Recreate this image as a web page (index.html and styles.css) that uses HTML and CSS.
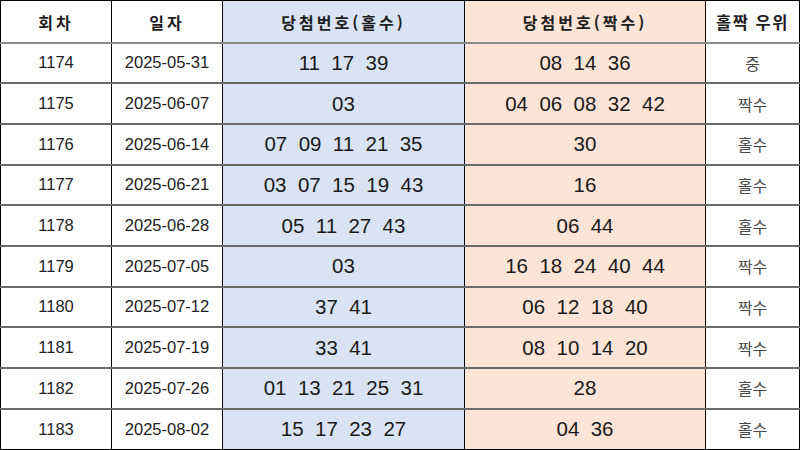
FILE: index.html
```html
<!DOCTYPE html>
<html lang="ko">
<head>
<meta charset="utf-8">
<link rel="stylesheet" href="styles.css">
</head>
<body>
<table class="grid">
  <colgroup>
    <col class="c-round"><col class="c-date"><col class="c-odd"><col class="c-even"><col class="c-win">
  </colgroup>
  <thead>
    <tr>
      <th>회차</th><th>일자</th><th class="odd">당첨번호(홀수)</th><th class="even">당첨번호(짝수)</th><th class="win-h">홀짝 우위</th>
    </tr>
  </thead>
  <tbody>
    <tr><td>1174</td><td>2025-05-31</td><td class="odd num">11  17  39</td><td class="even num">08  14  36</td><td class="win">중</td></tr>
    <tr><td>1175</td><td>2025-06-07</td><td class="odd num">03</td><td class="even num">04  06  08  32  42</td><td class="win">짝수</td></tr>
    <tr><td>1176</td><td>2025-06-14</td><td class="odd num">07  09  11  21  35</td><td class="even num">30</td><td class="win">홀수</td></tr>
    <tr><td>1177</td><td>2025-06-21</td><td class="odd num">03  07  15  19  43</td><td class="even num">16</td><td class="win">홀수</td></tr>
    <tr><td>1178</td><td>2025-06-28</td><td class="odd num">05  11  27  43</td><td class="even num">06  44</td><td class="win">홀수</td></tr>
    <tr><td>1179</td><td>2025-07-05</td><td class="odd num">03</td><td class="even num">16  18  24  40  44</td><td class="win">짝수</td></tr>
    <tr><td>1180</td><td>2025-07-12</td><td class="odd num">37  41</td><td class="even num">06  12  18  40</td><td class="win">짝수</td></tr>
    <tr><td>1181</td><td>2025-07-19</td><td class="odd num">33  41</td><td class="even num">08  10  14  20</td><td class="win">짝수</td></tr>
    <tr><td>1182</td><td>2025-07-26</td><td class="odd num">01  13  21  25  31</td><td class="even num">28</td><td class="win">홀수</td></tr>
    <tr><td>1183</td><td>2025-08-02</td><td class="odd num">15  17  23  27</td><td class="even num">04  36</td><td class="win">홀수</td></tr>
  </tbody>
</table>
</body>
</html>
```
FILE: styles.css
```css
html, body {
  margin: 0;
  padding: 0;
  background: #ffffff;
}
.grid {
  border-collapse: collapse;
  table-layout: fixed;
  width: 799px;
  font-family: "Liberation Sans", Arial, "Noto Sans CJK KR", sans-serif;
  color: #222;
}
.c-round { width: 111px; }
.c-date { width: 111px; }
.c-odd { width: 242px; }
.c-even { width: 241px; }
.c-win { width: 94px; }
.grid th, .grid td {
  border-left: 1px solid #000;
  border-right: 1px solid #000;
  text-align: center;
  vertical-align: middle;
  padding: 0;
  white-space: pre;
}
.grid thead tr { height: 42px; }
.grid tbody tr { height: 40.7px; }
.grid th {
  font-family: "Noto Sans CJK KR", sans-serif;
  font-weight: 700;
  font-size: 16px;
  letter-spacing: 3px;
  color: #1e1e1e;
  padding-top: 2px;
  border-top: 1px solid #000;
  border-bottom: 2px solid #8a8a8a;
}
.grid th.win-h { letter-spacing: 1.5px; font-size: 16.5px; }
.grid td {
  font-size: 16.5px;
  border-bottom: 2px solid #6a6a6a;
}
.grid tbody tr:last-child td { border-bottom: 1px solid #000; }
.grid .odd { background: #dae3f3; }
.grid .even { background: #fce4d6; }
.grid td.num {
  font-size: 20.5px;
  color: #1a1a1a;
}
.grid td.win {
  font-family: "Noto Sans CJK KR", sans-serif;
  font-weight: 400;
  font-size: 16px;
  color: #4a4a4a;
}
```
